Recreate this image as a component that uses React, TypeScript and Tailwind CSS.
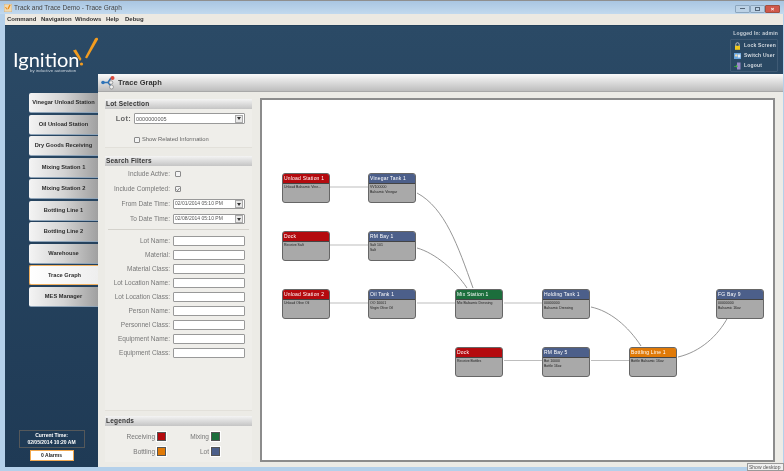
import React from "react";

const tabs = ["Vinegar Unload Station","Oil Unload Station","Dry Goods Receiving","Mixing Station 1","Mixing Station 2","Bottling Line 1","Bottling Line 2","Warehouse","Trace Graph","MES Manager"];
const textRows = ["Lot Name:","Material:","Material Class:","Lot Location Name:","Lot Location Class:","Person Name:","Personnel Class:","Equipment Name:","Equipment Class:"];

type N = { x: number; y: number; t: string; c: string; l: string[] };
const RED = "bg-[#b40a0e]", BLUE = "bg-[#4c5f8a]", GREEN = "bg-[#1c6e3c]", ORANGE = "bg-[#e07a08]";
const nodes: N[] = [
  { x: 22, y: 75, t: "Unload Station 1", c: RED, l: ["Unload Balsamic Vine..."] },
  { x: 108, y: 75, t: "Vinegar Tank 1", c: BLUE, l: ["VV100000", "Balsamic Vinegar"] },
  { x: 22, y: 133, t: "Dock", c: RED, l: ["Receive Salt"] },
  { x: 108, y: 133, t: "RM Bay 1", c: BLUE, l: ["Salt 101", "Salt"] },
  { x: 22, y: 191, t: "Unload Station 2", c: RED, l: ["Unload Olive Oil"] },
  { x: 108, y: 191, t: "Oil Tank 1", c: BLUE, l: ["OO 10001", "Virgin Olive Oil"] },
  { x: 195, y: 191, t: "Mix Station 1", c: GREEN, l: ["Mix Balsamic Dressing"] },
  { x: 282, y: 191, t: "Holding Tank 1", c: BLUE, l: ["00000000", "Balsamic Dressing"] },
  { x: 456, y: 191, t: "FG Bay 9", c: BLUE, l: ["00000000", "Balsamic 16oz"] },
  { x: 195, y: 249, t: "Dock", c: RED, l: ["Receive Bottles"] },
  { x: 282, y: 249, t: "RM Bay 5", c: BLUE, l: ["Bot 10000", "Bottle 16oz"] },
  { x: 369, y: 249, t: "Bottling Line 1", c: ORANGE, l: ["Bottle Balsamic 16oz"] },
];

function SectionHead({ t }: { t: string }) {
  return (
    <div className="h-[10px] flex items-center pl-[1px] bg-gradient-to-b from-[#f4f4f4] to-[#c4c4c4] text-[6.5px] font-bold tracking-[0.2px] text-[#333]">
      {t}
    </div>
  );
}

function Check({ on }: { on?: boolean }) {
  return (
    <div className="w-[6px] h-[6px] border border-[#8a8a8a] bg-[#f4f4f4] flex items-center justify-center rounded-[1px]">
      {on && (
        <svg width="5" height="5" viewBox="0 0 5 5"><path d="M0.6 2.4 L2 3.9 L4.4 0.8" fill="none" stroke="#555" strokeWidth="0.9" /></svg>
      )}
    </div>
  );
}

function Combo({ v, big }: { v: string; big?: boolean }) {
  return (
    <div className={`flex items-center justify-between border border-[#999] rounded-[1px] bg-white pl-[1px] text-[#555] ${big ? "h-[11px] text-[5.5px] w-[111px]" : "h-[10px] text-[5px] w-[72px]"}`}>
      <span>{v}</span>
      <div className="w-[8px] h-[8px] mr-[1px] border border-[#aaa] bg-[#e8e8e8] flex items-center justify-center">
        <svg width="4" height="3" viewBox="0 0 4 3"><path d="M0 0 H4 L2 3 Z" fill="#333" /></svg>
      </div>
    </div>
  );
}

function Row({ label, children }: { label: string; children: React.ReactNode }) {
  return (
    <div className="flex items-center h-[14px]">
      <div className="w-[66px] text-right text-[6.5px] text-[#777] whitespace-nowrap pr-[1px]">{label}</div>
      <div className="ml-[2px]">{children}</div>
    </div>
  );
}

function Legend({ label, cls }: { label: string; cls: string }) {
  return (
    <div className="flex items-center justify-end gap-[2px]">
      <span className="text-[6.5px] text-[#777] text-right">{label}</span>
      <div className={`w-[9px] h-[9px] border border-[#555] outline outline-1 outline-white ${cls}`} />
    </div>
  );
}

export default function App() {
  return (
    <div className="relative w-[784px] h-[471px] overflow-hidden flex flex-col bg-[#b4d0ea] blur-[0.45px]" style={{ fontFamily: '"Liberation Sans", Arial, sans-serif' }}>
      {/* title bar */}
      <div className="h-[14px] shrink-0 flex items-center border-t border-[#8f8f8f] bg-gradient-to-b from-[#a9c6e2] to-[#c2d9ee] pl-[4px]">
        <svg width="8" height="8" viewBox="0 0 8 8"><rect width="8" height="8" fill="#f0d9b0" stroke="#b59a70" strokeWidth="0.5" /><path d="M6 1 L4 5" stroke="#ef8c14" strokeWidth="1.4" /><path d="M1.5 3 L3 5.5" stroke="#ef8c14" strokeWidth="1" /></svg>
        <span className="ml-[2px] text-[6.5px] text-[#444]">Track and Trace Demo - Trace Graph</span>
        <div className="ml-auto mr-[4px] mt-[2px] flex">
          <div className="w-[15px] h-[8px] rounded-[1px] border border-[#8ca6be] bg-[#bcd2e6] flex items-center justify-center"><div className="w-[5px] h-[1px] bg-[#55677a]" /></div>
          <div className="w-[15px] h-[8px] rounded-[1px] border border-[#8ca6be] bg-[#bcd2e6] flex items-center justify-center"><div className="w-[5px] h-[4px] border border-[#55677a]" /></div>
          <div className="w-[15px] h-[8px] rounded-[1px] border border-[#a05040] bg-[#d0584a] flex items-center justify-center text-[6px] leading-none text-white font-bold">×</div>
        </div>
      </div>
      {/* menu */}
      <div className="h-[11px] shrink-0 ml-[5px] mr-[1px] flex items-center bg-[#ece9e2] text-[6px] font-bold text-[#333]">
        <span className="ml-[2px] w-[34px]">Command</span>
        <span className="w-[34px]">Navigation</span>
        <span className="w-[31px]">Windows</span>
        <span className="w-[19px]">Help</span>
        <span>Debug</span>
      </div>
      {/* app */}
      <div className="flex-1 min-h-0 ml-[5px] mr-[1px] mb-[4px] flex flex-col bg-gradient-to-b from-[#2b4a66] to-[#1f3a55]">
        {/* header */}
        <div className="relative h-[49px] shrink-0 border-t border-[#23405a] flex justify-between">
          <div className="relative w-[100px] h-[49px]">
            <span className="absolute left-[8px] top-[20px] text-[20px] leading-[26px] text-white" style={{ fontFamily: "Lato, sans-serif", fontWeight: 400 }}>Ignition</span>
            <span className="absolute left-[25px] top-[42px] text-[4.4px] leading-[5px] text-[#c8d2dc] whitespace-nowrap">by inductive automation</span>
            <svg className="absolute left-[66px] top-[9px]" width="34" height="32" viewBox="0 0 34 32">
              <path d="M24 3.5 C25 2, 27.5 2.5, 27 4.5 L16 23.5 L14 22.5 Z" fill="#f39c1f" />
              <path d="M2 15.5 L5 14.5 L10.5 24 L9 26 Z" fill="#f39c1f" />
              <circle cx="10.5" cy="29" r="1.6" fill="#f39c1f" />
            </svg>
          </div>
          <div className="w-[50px] mr-[5px] flex flex-col items-end">
            <div className="h-[13px] flex items-center text-[5px] font-bold text-[#c8d0d8] whitespace-nowrap pt-[2px] tracking-[0.2px]">Logged In: admin</div>
            <div className="w-[48px] h-[33px] rounded-[1px] border border-[#3f5a74] bg-[#2a4863] flex flex-col justify-center gap-[1px] pl-[3px] text-[5px] font-bold text-[#d4dae0] tracking-[0.2px]">
              <div className="flex items-center h-[9px] gap-[3px] whitespace-nowrap">
                <svg className="shrink-0" width="7" height="8" viewBox="0 0 7 8"><path d="M1.8 4V2.4a1.7 1.7 0 0 1 3.4 0V4" fill="none" stroke="#c8c8c8" strokeWidth="0.9" /><rect x="1" y="3.8" width="5" height="4" fill="#f0c81e" /></svg>
                <span>Lock Screen</span>
              </div>
              <div className="flex items-center h-[9px] gap-[3px] whitespace-nowrap">
                <svg className="shrink-0" width="7" height="8" viewBox="0 0 7 8"><rect y="1" width="7" height="6" fill="#6aa6e0" /><circle cx="2.2" cy="3.4" r="1.2" fill="#f2d9a8" /><rect x="3.8" y="2.5" width="2.6" height="3" fill="#e9eef4" /></svg>
                <span>Switch User</span>
              </div>
              <div className="flex items-center h-[9px] gap-[3px] whitespace-nowrap">
                <svg className="shrink-0" width="7" height="8" viewBox="0 0 7 8"><rect x="3" y="0.5" width="3.5" height="7" fill="#9a8ac8" /><path d="M0 4 H2 V2.6 L4 4.2 L2 5.8 V4.8 H0 Z" fill="#3fb03f" /></svg>
                <span>Logout</span>
              </div>
            </div>
          </div>
        </div>
        {/* below header */}
        <div className="flex-1 min-h-0 flex">
          {/* sidebar */}
          <div className="w-[93px] shrink-0 flex flex-col pt-[19px] pl-[24px]">
            <div className="flex flex-col gap-[1.5px]">
              {tabs.map((t) => (
                <div
                  key={t}
                  className={`h-[20px] flex items-center justify-center rounded-l-[2px] text-[5.7px] font-bold text-[#2c2c2c] whitespace-nowrap ${t === "Trace Graph" ? "w-[70px] bg-gradient-to-r from-white to-[#eeeeee] border-y border-l border-[#f0b060]" : "w-[69px] bg-gradient-to-r from-[#f4f4f4] via-[#d4d4d4] to-[#a0a0a0] border-b border-[#8fa4b8]"}`}
                >
                  {t}
                </div>
              ))}
            </div>
            <div className="mt-auto mb-[6px] flex flex-col items-center -ml-[24px]">
              <div className="w-[66px] h-[18px] border border-[#55585a] flex flex-col items-center justify-center text-[5px] leading-[7px] font-bold text-white">
                <span>Current Time:</span>
                <span>02/05/2014 10:20 AM</span>
              </div>
              <div className="w-[44px] h-[11px] mt-[2px] bg-white border border-[#f0a850] flex items-center justify-center text-[5px] font-bold text-[#222]">0 Alarms</div>
            </div>
          </div>
          {/* main panel */}
          <div className="flex-1 min-w-0 flex flex-col bg-[#ecebe6]">
            <div className="h-[18px] shrink-0 flex items-center bg-gradient-to-b from-[#fafafa] to-[#bdbdbd] border-b border-[#a8a8a8] pl-[3px]">
              <svg width="15" height="15" viewBox="0 0 15 15">
                <path d="M1 7.5 H7 M7 7.5 L10 3 M7 7.5 L10 11" stroke="#2f74b8" strokeWidth="1.6" fill="none" />
                <circle cx="2" cy="7.5" r="1.8" fill="#2f74b8" />
                <circle cx="11.5" cy="3" r="2" fill="#d84a3c" />
                <circle cx="10" cy="7.5" r="1.8" fill="#f0f0f0" stroke="#777" strokeWidth="0.6" />
                <circle cx="10.5" cy="12" r="2" fill="#f0f0f0" stroke="#777" strokeWidth="0.6" />
              </svg>
              <span className="ml-[2px] text-[7.5px] font-bold text-[#333]">Trace Graph</span>
            </div>
            <div className="flex-1 min-h-0 flex">
              {/* filter column */}
              <div className="w-[160px] shrink-0 pl-[7px] pr-[6px] flex flex-col pt-[7px] pb-[5px]">
                <div className="h-[49px] flex flex-col bg-[#efeeea] border-b border-[#e2e0da]">
                  <SectionHead t="Lot Selection" />
                  <div className="flex items-center mt-[4px]">
                    <span className="w-[26px] text-right text-[7.5px] font-bold text-[#666] tracking-[0.3px]">Lot:</span>
                    <div className="ml-[3px]"><Combo v="0000000005" big /></div>
                  </div>
                  <div className="flex items-center mt-[11px] ml-[29px] gap-[2px]">
                    <Check />
                    <span className="text-[5.8px] text-[#666]">Show Related Information</span>
                  </div>
                </div>
                <div className="mt-[8px] h-[255px] flex flex-col bg-[#efeeea] border-b border-[#e2e0da]">
                  <SectionHead t="Search Filters" />
                  <div className="pt-[1px]">
                    <Row label="Include Active:"><div className="ml-[2px]"><Check /></div></Row>
                    <div className="h-[1px]" />
                    <Row label="Include Completed:"><div className="ml-[2px]"><Check on /></div></Row>
                    <div className="h-[1px]" />
                    <Row label="From Date Time:"><Combo v="02/01/2014 05:10 PM" /></Row>
                    <div className="h-[1px]" />
                    <Row label="To Date Time:"><Combo v="02/08/2014 05:10 PM" /></Row>
                    <div className="h-[1px] bg-[#d4d2cc] mx-[3px] mt-[3px] mb-[4px]" />
                    {textRows.map((l) => (
                      <Row key={l} label={l}><div className="w-[72px] h-[10px] bg-white border border-[#999] rounded-[1px]" /></Row>
                    ))}
                  </div>
                </div>
                <div className="mt-[5px] flex-1 flex flex-col bg-[#efeeea]">
                  <SectionHead t="Legends" />
                  <div className="grid grid-cols-[61px_54px] gap-y-[5px] pt-[6px]">
                    <Legend label="Receiving" cls="bg-[#b40a0e]" />
                    <Legend label="Mixing" cls="bg-[#1c6e3c]" />
                    <Legend label="Bottling" cls="bg-[#e07a08]" />
                    <Legend label="Lot" cls="bg-[#4c5f8a]" />
                  </div>
                </div>
              </div>
              {/* graph */}
              <div className="ml-[2px] mt-[6px] mb-[5px] w-[515px] h-[364px] relative bg-white border-2 border-[#8c8c8c] overflow-hidden">
                <svg className="absolute left-[-2px] top-[-2px]" width="515" height="364" viewBox="0 0 515 364" fill="none">
                  <g stroke="#bdbdbd" strokeWidth="1.2">
                    <path d="M70 89 H108" /><path d="M70 147 H108" /><path d="M70 205 H108" /><path d="M157 205 H195" />
                    <path d="M244 205 H282" /><path d="M244 262.5 H282" /><path d="M331 262.5 H369" />
                  </g>
                  <g stroke="#8a8a8a" strokeWidth="0.9">
                    <path d="M157 95 C185 110, 198 148, 213 190" />
                    <path d="M157 150 C175 155, 195 172, 207 190" />
                    <path d="M331 209 C350 213, 368 228, 381 248" />
                    <path d="M418 259 C440 254, 458 238, 468 219" />
                  </g>
                </svg>
                {nodes.map((n, i) => (
                  <div
                    key={i}
                    className="absolute w-[48px] h-[30px] rounded-[3px] border border-[#666] bg-[#a9a9a9] overflow-hidden"
                    style={{ left: n.x - 2, top: n.y - 2 }}
                  >
                    <div className={`h-[10px] flex items-center pl-[1px] text-[5px] tracking-[0.2px] text-white border-b border-[#444] whitespace-nowrap ${n.c}`}>{n.t}</div>
                    <div className="pl-[1px] pt-[1px] text-[3.5px] leading-[5px] text-[#222]">
                      {n.l.map((s, j) => (<div key={j} className="whitespace-nowrap">{s}</div>))}
                    </div>
                  </div>
                ))}
              </div>
            </div>
          </div>
        </div>
      </div>
      <div className="absolute left-[747px] top-[463px] w-[37px] h-[8px] bg-[#f0f0f0] border border-[#999] text-[5px] leading-[6px] text-[#555] whitespace-nowrap pl-[1px] overflow-hidden">Show desktop</div>
    </div>
  );
}
